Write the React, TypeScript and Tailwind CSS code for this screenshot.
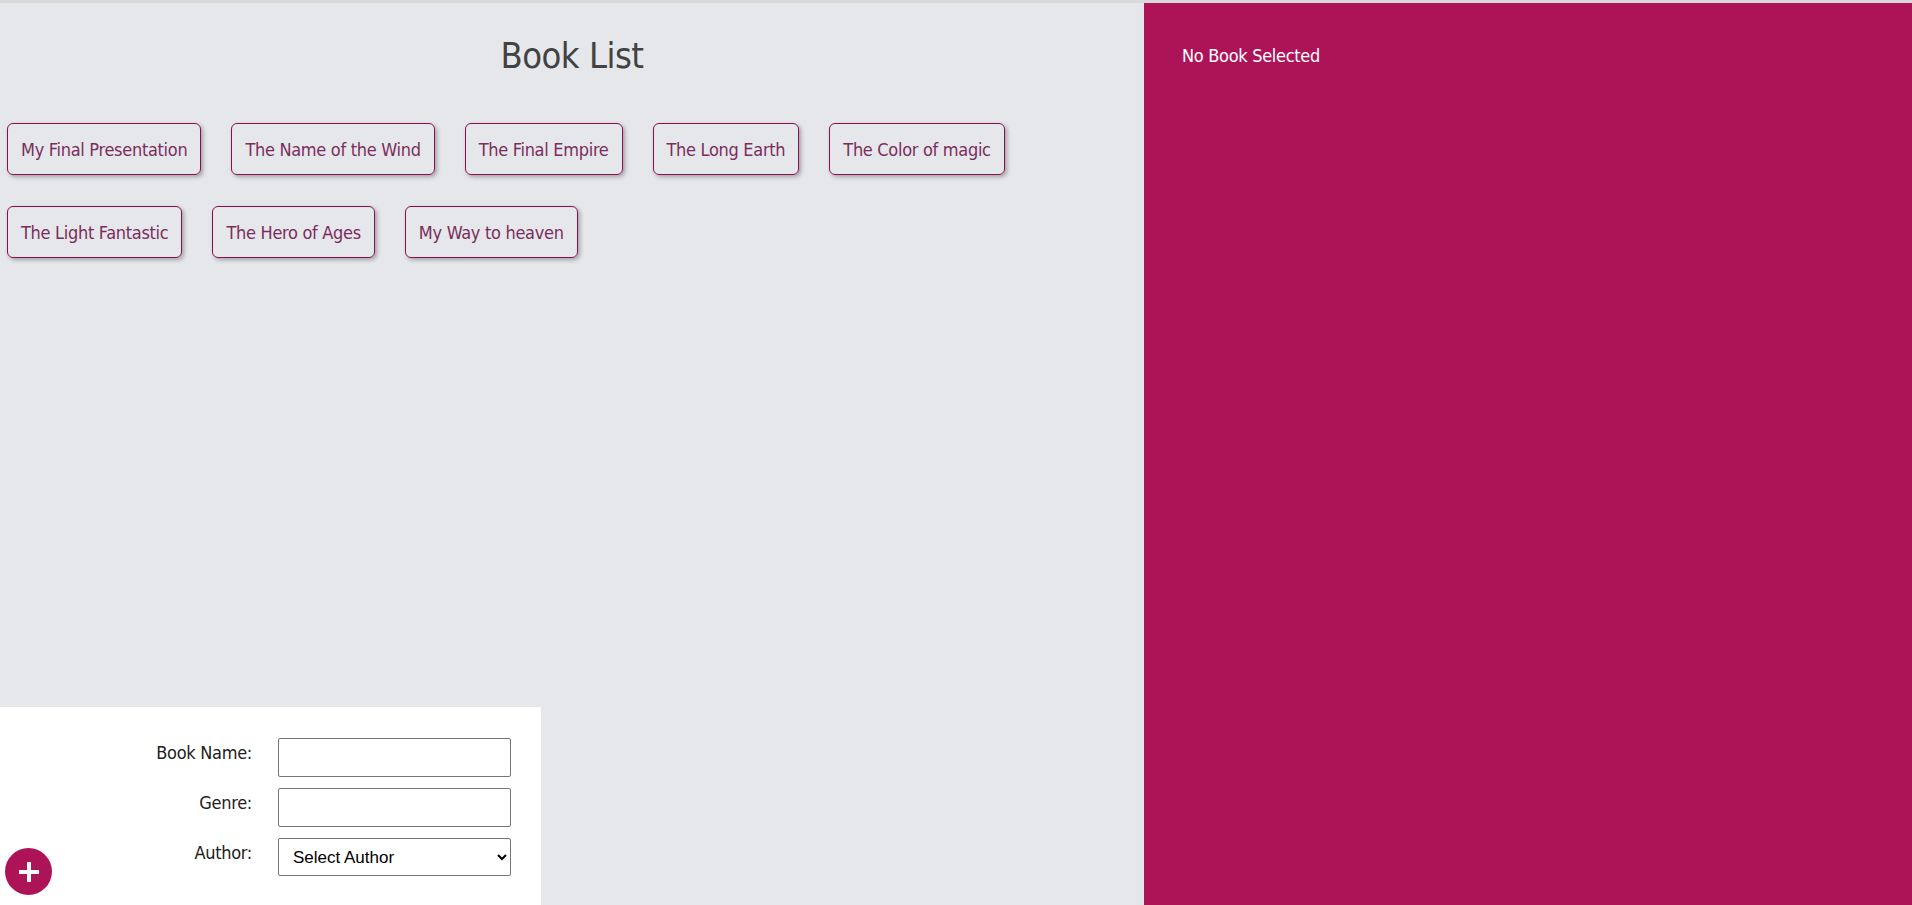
import { useState } from 'react';

/** Books shown as chips in the list, split in the two rows of the picture. */
const ROWS: string[][] = [
  ['My Final Presentation', 'The Name of the Wind', 'The Final Empire', 'The Long Earth', 'The Color of magic'],
  ['The Light Fantastic', 'The Hero of Ages', 'My Way to heaven'],
];

/** A single book chip. */
function BookChip({ title, onClick }: { title: string; onClick: () => void }) {
  return (
    <li className="shrink-0">
      <button
        type="button"
        onClick={onClick}
        className="flex h-[52px] items-center whitespace-nowrap rounded-[6px] border border-[#880e4f] px-[13px] text-[#7a2d5c] shadow-[2px_2px_4px_rgba(0,0,0,0.3)]"
      >
        {title}
      </button>
    </li>
  );
}

export default function App() {
  const [selected, setSelected] = useState<string | null>(null);

  return (
    <div className="flex h-[905px] w-full border-t-[3px] border-[#d9d9d9] font-['Liberation_Sans_Narrow','DejaVu_Sans_Condensed',sans-serif] text-[18px] tracking-[-0.3px]">
      {/* Left: list + add form */}
      <main className="relative flex w-[1144px] shrink-0 flex-col bg-[#e6e7eb]">
        <h1 className="pt-[29px] text-center text-[36px] leading-[48px] tracking-[-0.5px] text-[#424242]">Book List</h1>

        <div className="mt-[43px] flex flex-col gap-y-[31px] pl-[7px]">
          {ROWS.map((row, i) => (
            <ul key={i} className="flex gap-x-[30px]">
              {row.map((t) => (
                <BookChip key={t} title={t} onClick={() => setSelected(t)} />
              ))}
            </ul>
          ))}
        </div>

        <form className="mt-auto h-[198px] w-[541px] bg-white pt-[31px]">
          <div className="grid grid-cols-[252px_233px] items-start gap-x-[26px] gap-y-[11px] leading-[30px] text-[#212121]">
            <label htmlFor="bookName" className="text-right">
              Book Name:
            </label>
            <input id="bookName" type="text" className="h-[39px] w-[233px] rounded-[2px] border border-[#767676] bg-white" />

            <label htmlFor="genre" className="text-right">
              Genre:
            </label>
            <input id="genre" type="text" className="h-[39px] w-[233px] rounded-[2px] border border-[#767676] bg-white" />

            <label htmlFor="author" className="text-right">
              Author:
            </label>
            <select
              id="author"
              defaultValue=""
              className="h-[38px] w-[233px] rounded-[2px] border border-[#767676] bg-white pl-[10px] font-['Liberation_Sans',sans-serif] text-[17px] tracking-normal text-black"
            >
              <option value="">Select Author</option>
            </select>
          </div>
        </form>

        <button
          type="button"
          aria-label="Add book"
          className="absolute bottom-[10px] left-[5px] flex h-[47px] w-[47px] items-center justify-center rounded-full bg-[#ad1457]"
        >
          <svg width="20" height="20" viewBox="0 0 20 20" fill="none" stroke="white" strokeWidth="4">
            <path d="M10 0v20M0 10h20" />
          </svg>
        </button>
      </main>

      {/* Right: details */}
      <aside className="flex-1 bg-[#ad1457] pl-[38px] pt-[38px] leading-[30px] text-white">
        {selected ?? 'No Book Selected'}
      </aside>
    </div>
  );
}
